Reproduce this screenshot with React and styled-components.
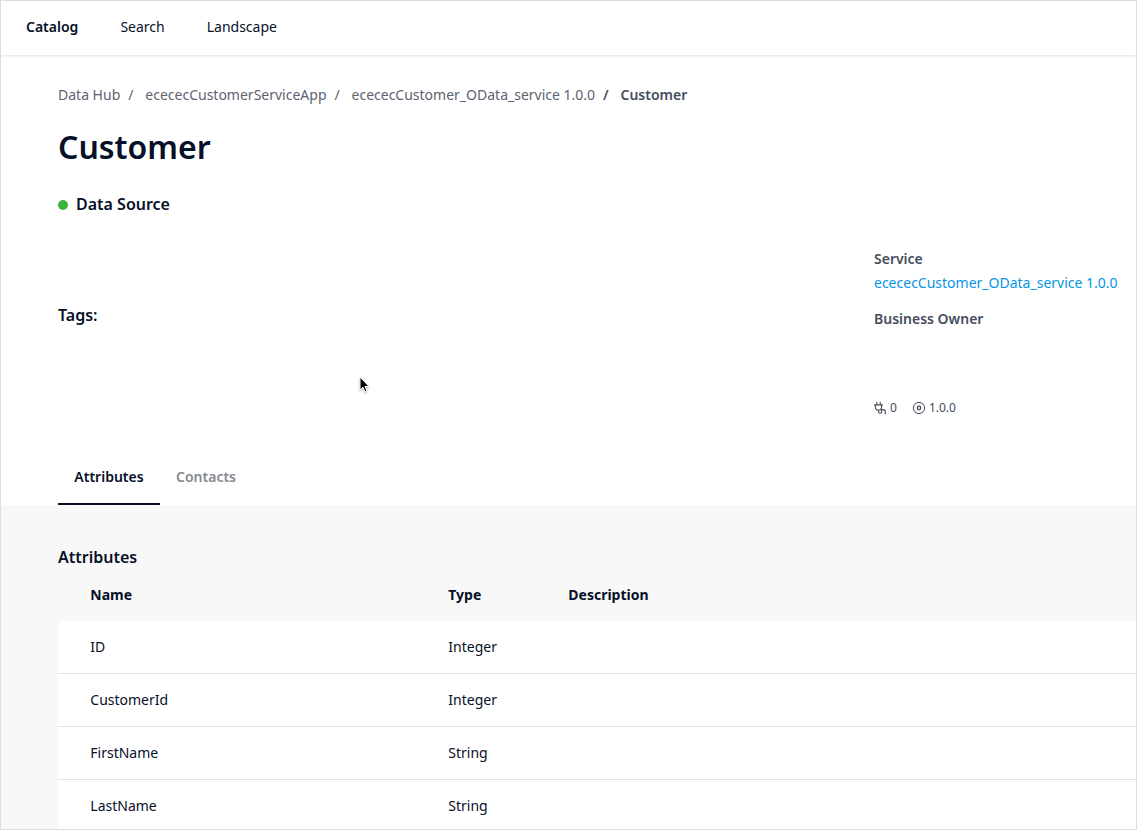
import React from 'react';
import styled, { createGlobalStyle } from 'styled-components';

const Global = createGlobalStyle`
  *, *::before, *::after { box-sizing: border-box; }
  body { margin: 0; background: #fff; overflow: hidden; }
`;

const ink = '#061028';
const slate = '#454c5c';

const Page = styled.div`
  position: relative;
  display: flex;
  flex-direction: column;
  width: 1137px;
  height: 830px;
  border: 1px solid #dddddd;
  overflow: hidden;
  background: #fff;
  color: ${ink};
  font: 400 14px/20px 'Noto Sans', sans-serif;
`;

const Nav = styled.nav`
  display: flex;
  flex: none;
  align-items: center;
  gap: 42px;
  height: 54px;
  padding: 0 25px 2px;
  box-shadow: 0 1px 3px rgba(0, 0, 0, 0.13);
`;

const NavItem = styled.a`
  font-weight: ${(p) => (p.$active ? 600 : 400)};
`;

const Header = styled.header`
  flex: none;
  height: 450px;
  padding: 30px 0 0 57px;
  display: flex;
  flex-direction: column;
`;

const Breadcrumbs = styled.div`
  display: flex;
  white-space: pre;
  color: #5d6370;
`;

const Crumb = styled.span`
  color: ${(p) => (p.$current ? slate : 'inherit')};
  font-weight: ${(p) => (p.$current ? 600 : 400)};
`;

const Slash = styled(Crumb)`
  padding: 0 11.8px 0 8px;
`;

const Title = styled.h1`
  margin: 20px 0 0;
  font-size: 32px;
  line-height: 44px;
  font-weight: 600;
`;

const Columns = styled.div`
  display: grid;
  grid-template-columns: 816px 1fr;
  flex: 1;
`;

const Overview = styled.div`
  padding-top: 23px;
  font-size: 16px;
  line-height: 24px;
  font-weight: 600;
`;

const Kind = styled.div`
  display: flex;
  align-items: center;
  gap: 8px;
`;

const Dot = styled.span`
  width: 10px;
  height: 10px;
  margin-top: 2px;
  border-radius: 50%;
  background: #3cb33d;
`;

const Tags = styled.div`
  margin-top: 87px;
`;

const Side = styled.aside`
  padding-top: 80px;
  color: ${slate};
`;

const SideLabel = styled.div`
  font-weight: 600;
`;

const SideLink = styled.a`
  display: block;
  margin: 4px 0 16px;
  color: #0595e8;
  white-space: nowrap;
`;

const Stats = styled.div`
  display: flex;
  gap: 16px;
  margin-top: 69px;
  font-size: 12px;
`;

const Stat = styled.span`
  display: flex;
  align-items: center;
  gap: 4px;
  svg { display: block; overflow: visible; }
`;

const Tabs = styled.div`
  display: flex;
  height: 56px;
`;

const Tab = styled.button`
  height: 56px;
  padding: 2px 16px 0;
  min-width: ${(p) => (p.$active ? '102px' : '0')};
  border: 0;
  border-bottom: 2px solid ${(p) => (p.$active ? ink : 'transparent')};
  background: none;
  font: inherit;
  font-weight: 600;
  color: ${(p) => (p.$active ? ink : '#858991')};
`;

const Panel = styled.main`
  flex: 1;
  padding: 40px 0 0 57px;
  background: #f8f8f8;
`;

const PanelTitle = styled.h2`
  margin: 0;
  font-size: 16px;
  line-height: 24px;
  font-weight: 600;
`;

const Row = styled.div`
  display: grid;
  grid-template-columns: 358px 120px 1fr;
  align-items: center;
  height: 53px;
  padding-left: 32.3px;
  background: #fff;
  border-bottom: 1px solid #e2e2e2;
`;

const HeadRow = styled(Row)`
  height: 52px;
  background: none;
  border: 0;
  font-weight: 700;
`;

const Pointer = styled.svg`
  position: absolute;
  left: 356px;
  top: 374px;
  filter: drop-shadow(0 1px 1px rgba(0, 0, 0, 0.3));
`;

const attributes = [
  ['ID', 'Integer'],
  ['CustomerId', 'Integer'],
  ['FirstName', 'String'],
  ['LastName', 'String'],
];

const PlugIcon = () => (
  <svg width="12" height="12" viewBox="0 0 12 12" fill="none" stroke={slate} strokeWidth="1.1" strokeLinecap="round">
    <path d="M2.800 .4v2.300M6.200 .4v2.300M.5 2.900h8M1.400 3.100v1.800a3.100 3.100 0 0 0 6.200 0V3.100M4.500 8.100v1.400c0 1.200.6 1.700 1.500 1.700 1.400 0 1.900-.9 1.500-1.800-.5-1.100.1-1.800 1.400-1.800 1.500 0 2.400.9 2.400 2.100v2.200" />
  </svg>
);

const VersionIcon = () => (
  <svg width="12" height="12" viewBox="0 0 12 12" fill="none" stroke={slate}>
    <circle cx="6" cy="6" r="5.600" />
    <circle cx="6" cy="6" r="1.800" strokeWidth="1.200" />
    <circle cx="6" cy="6" r=".6" fill={slate} stroke="none" />
  </svg>
);

export default function App() {
  return (
    <Page>
      <Global />
      <Nav>
        <NavItem $active>Catalog</NavItem>
        <NavItem>Search</NavItem>
        <NavItem>Landscape</NavItem>
      </Nav>
      <Header>
        <Breadcrumbs>
          <Crumb>Data Hub</Crumb><Slash>/</Slash>
          <Crumb>ecececCustomerServiceApp</Crumb><Slash>/</Slash>
          <Crumb>ecececCustomer_OData_service 1.0.0</Crumb><Slash $current>/</Slash>
          <Crumb $current>Customer</Crumb>
        </Breadcrumbs>
        <Title>Customer</Title>
        <Columns>
          <Overview>
            <Kind><Dot />Data Source</Kind>
            <Tags>Tags:</Tags>
          </Overview>
          <Side>
            <SideLabel>Service</SideLabel>
            <SideLink>ecececCustomer_OData_service 1.0.0</SideLink>
            <SideLabel>Business Owner</SideLabel>
            <Stats>
              <Stat><PlugIcon />0</Stat>
              <Stat><VersionIcon />1.0.0</Stat>
            </Stats>
          </Side>
        </Columns>
        <Tabs>
          <Tab $active>Attributes</Tab>
          <Tab>Contacts</Tab>
        </Tabs>
      </Header>
      <Panel>
        <PanelTitle>Attributes</PanelTitle>
        <HeadRow><span>Name</span><span>Type</span><span>Description</span></HeadRow>
        {attributes.map(([name, type]) => (
          <Row key={name}><span>{name}</span><span>{type}</span><span /></Row>
        ))}
      </Panel>
      <Pointer width="14" height="20" viewBox="0 0 14 20">
        <path d="M3 2v13l3-2.800 2 4.600 2-.9-2-4.400h4z" fill="#000" stroke="#fff" strokeWidth="1" />
      </Pointer>
    </Page>
  );
}
